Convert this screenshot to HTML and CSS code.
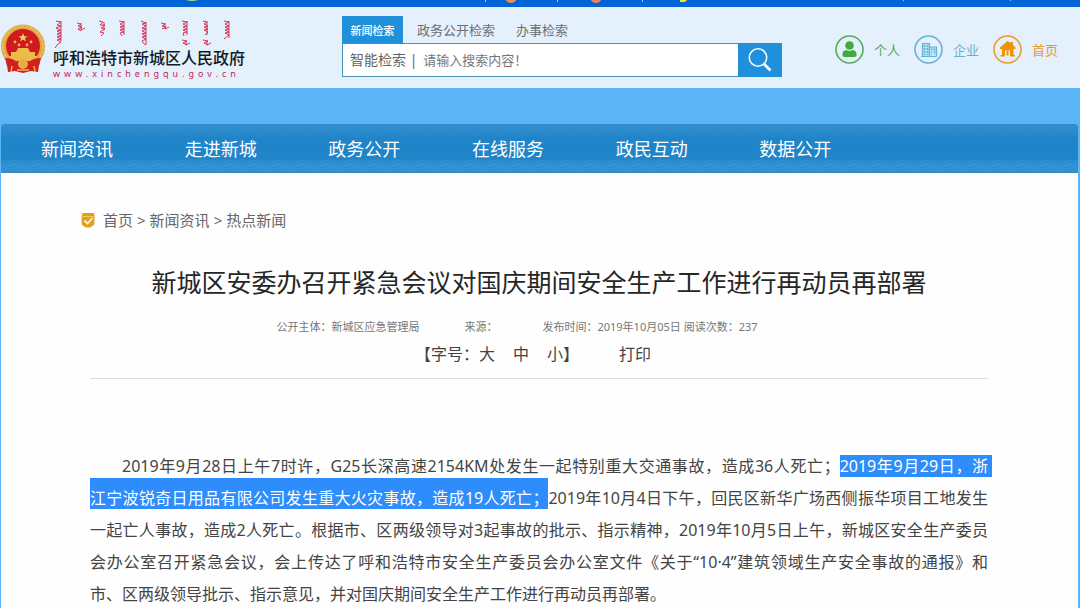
FILE: index.html
```html
<!DOCTYPE html>
<html lang="zh-CN">
<head>
<meta charset="utf-8">
<meta name="viewport" content="width=device-width, initial-scale=1">
<title>呼和浩特市新城区人民政府</title>
<link rel="stylesheet" href="styles.css">
</head>
<body>
<div class="topbar">
  <svg width="1080" height="7" viewBox="0 0 1080 7" aria-hidden="true">
    <ellipse cx="192" cy="-3" rx="9" ry="4" fill="#9fe08a"/>
    <circle cx="511" cy="-3" r="6" fill="#e8935a"/>
    <circle cx="596" cy="-3" r="6" fill="#e8835a"/>
    <path d="M680 0h7l-2 2h-5z" fill="#f3e32c"/>
    <path d="M485.500 0v2M557.500 0v2M642.500 0v2M903.500 0v1M1010.500 0v1" stroke="#9cc8f5"/>
  </svg>
</div>

<header class="header">
  <div class="brand">
    <svg class="emblem" viewBox="0 0 46 50" aria-hidden="true">
      <path d="M6 34 8 48 15 47 23 49 31 47 38 48 40 34z" fill="#d3201f"/>
      <circle cx="23" cy="22.500" r="22" fill="#dfa543"/>
      <circle cx="23" cy="22.500" r="20" fill="none" stroke="#ecbd5c" stroke-width="2" stroke-dasharray="3 1"/>
      <circle cx="23" cy="22" r="17" fill="#cf1a20"/>
      <path d="m23 9 1.200 3.200h3.400l-2.700 2 1 3.300-2.900-2-2.900 2 1-3.300-2.700-2h3.400z" fill="#f5cf57"/>
      <g fill="#f0b94b">
        <circle cx="15" cy="18" r="1.400"/><circle cx="19" cy="21" r="1.400"/><circle cx="27" cy="21" r="1.400"/><circle cx="31" cy="18" r="1.400"/>
        <path d="M16 28l2-4h10l2 4h5v4H11v-4z"/>
        <path d="M9 32h28l-2 5H11z"/>
      </g>
      <path d="M5 34q8 0 12 4h12q4-4 12-4l-2 8q-6-2-8 3H15q-2-5-8-3z" fill="#d3201f"/>
      <circle cx="23" cy="40" r="5" fill="#e7ae45"/>
      <path d="M12 42l-1 6M34 42l1 6M17 46h12" stroke="#edb84b" stroke-width="1.500"/>
    </svg>
    <div class="brand-text">
      <svg class="script" viewBox="0 0 188 28" aria-hidden="true">
        <g fill="none" stroke="#d0365a" stroke-width="1">
          <path d="M3 1l5 1-4 3 4 1-5 2 5 2-4 1 4 2-4 1 4 2-4 1 4 2-4 1 4 2-3 2-3 4M8 1v20"/>
          <path d="M24 3l4 1-3 2 4 1-4 2 3 2M28 3v7l4-2"/>
          <path d="M46 1l4 1-3 3 5 0-4 3 4 1-5 3 4 1-3 3M51 2v8"/>
          <path d="M66 1l5 1-4 2 4 2-4 1 4 2-4 1 4 2-4 1 2 3M71 1v14"/>
          <path d="M88 1l5 2-4 1 4 2-4 2 4 1-4 2 4 2-4 1 4 2-4 1 4 2-4 2 3 4M93 2v23"/>
          <path d="M108 3l4 1-3 2 4 1-4 2M112 3v6l4-2"/>
          <path d="M129 1l5 1-4 2 4 2-4 1 4 2-4 1 4 2-4 1 1 3M134 1v14M129 20l5 1-4 2 4 2M133 21v4l4-2"/>
          <path d="M150 1l4 1-3 2 4 2-4 1 4 2-4 1 4 2-3 3M154 1v14M150 20l5 1-4 2 4 2M154 21v4l4-2"/>
          <path d="M171 1l5 1-4 2 4 2-4 1 4 2-4 1 4 2-4 1 4 2-5 4M176 1v17"/>
        </g>
      </svg>
      <div class="brand-name">呼和浩特市新城区人民政府</div>
      <div class="brand-url">www.xinchengqu.gov.cn</div>
    </div>
  </div>

  <form class="search" role="search">
    <div class="tabs">
      <button type="button" class="tab tab-active">新闻检索</button>
      <button type="button" class="tab">政务公开检索</button>
      <button type="button" class="tab">办事检索</button>
    </div>
    <div class="search-row">
      <label class="search-label" for="q">智能检索 |</label>
      <input class="search-input" id="q" type="text" placeholder="请输入搜索内容！">
      <button class="search-button" type="submit" aria-label="搜索">
        <svg width="24" height="24" viewBox="0 0 24 24" fill="none" stroke="#eefaff" aria-hidden="true">
          <circle cx="10" cy="9.500" r="8.700" stroke-width="1.600"/>
          <path d="M16 16l6.500 6.500" stroke-width="2.800"/>
        </svg>
      </button>
    </div>
  </form>

  <nav class="user-links" aria-label="用户">
    <a class="user-link person" href="#">
      <svg width="29" height="29" viewBox="0 0 29 29" aria-hidden="true">
        <circle cx="14.500" cy="14.500" r="13.500" fill="none" stroke="currentColor" stroke-width="1.600"/>
        <circle cx="14.500" cy="10.500" r="4.300" fill="#3fab3f"/>
        <path d="M7.500 21v-2q0-3.500 4-4 3 2.200 6 0 4 .5 4 4v2q-1 1-2 1h-10q-1 0-2-1z" fill="#3fab3f"/>
      </svg>
      <span>个人</span>
    </a>
    <a class="user-link company" href="#">
      <svg width="29" height="29" viewBox="0 0 29 29" aria-hidden="true">
        <circle cx="14.500" cy="14.500" r="13.500" fill="none" stroke="currentColor" stroke-width="1.600"/>
        <path d="M8.500 21V8.500h7V21M15.500 12h7v9M7 21.500h16" fill="#b5ddf1" stroke="#62b3dc" stroke-width="1.200"/>
        <path d="M10.500 10v10M13.500 10v10M17.500 13.500v7M20.500 13.500v7" stroke="#62b3dc" stroke-width="1.500" stroke-dasharray="2 1"/>
      </svg>
      <span>企业</span>
    </a>
    <a class="user-link home" href="#">
      <svg width="29" height="29" viewBox="0 0 29 29" aria-hidden="true">
        <circle cx="14.500" cy="14.500" r="13.500" fill="none" stroke="currentColor" stroke-width="1.600"/>
        <path d="M14.500 6l3 2V7h2.500v3l2.500 2.500v1.500h-2v6h1.500v1.500H17v-6h-5v6H7.500V20H9v-6H7v-1.500z" fill="#f09208"/>
        <path d="M13.500 15.500h2v5h-2z" fill="#f09208"/>
      </svg>
      <span>首页</span>
    </a>
  </nav>
</header>

<div class="page">
  <nav class="mainnav" aria-label="主导航">
    <a href="#">新闻资讯</a>
    <a href="#">走进新城</a>
    <a href="#">政务公开</a>
    <a href="#">在线服务</a>
    <a href="#">政民互动</a>
    <a href="#">数据公开</a>
  </nav>

  <main class="content">
    <nav class="crumbs" aria-label="当前位置">
      <svg width="14" height="15" viewBox="0 0 14 15" aria-hidden="true">
        <path d="M1 1.500Q1 0 2.500 0h9Q13.500 0 13.500 1.500V10q0 2-2 3L9 14.500H5L2.500 13Q.5 12 .5 10z" fill="#dfa01f"/>
        <path d="M0 3.500h14" stroke="#f0c467"/>
        <path d="M3.500 7.500l3 3 5-5.500" fill="none" stroke="#fff6dc" stroke-width="1.800"/>
      </svg>
      <a href="#">首页</a><span>&gt;</span><a href="#">新闻资讯</a><span>&gt;</span><a href="#">热点新闻</a>
    </nav>

    <article class="article">
      <h1 class="title">新城区安委办召开紧急会议对国庆期间安全生产工作进行再动员再部署</h1>
      <div class="meta">
        <span>公开主体：新城区应急管理局</span>
        <span>来源：</span>
        <span>发布时间：2019年10月05日 阅读次数：237</span>
      </div>
      <div class="tools">
        <div class="sizes">
          <span>【字号：<button type="button">大</button></span>
          <button type="button">中</button>
          <span><button type="button">小</button>】</span>
        </div>
        <button type="button">打印</button>
      </div>
      <p class="body">
        <span class="line indent">2019年9月28日上午7时许，G25长深高速2154KM处发生一起特别重大交通事故，造成36人死亡；<span class="mark mark-start">2019年9月29日，浙</span></span>
        <span class="line"><span class="mark mark-next">江宁波锐奇日用品有限公司发生重大火灾事故，造成19人死亡；</span>2019年10月4日下午，回民区新华广场西侧振华项目工地发生</span>
        <span class="line">一起亡人事故，造成2人死亡。根据市、区两级领导对3起事故的批示、指示精神，2019年10月5日上午，新城区安全生产委员</span>
        <span class="line">会办公室召开紧急会议，会上传达了呼和浩特市安全生产委员会办公室文件《关于“10·4”建筑领域生产安全事故的通报》和</span>
        <span class="line last">市、区两级领导批示、指示意见，并对国庆期间安全生产工作进行再动员再部署。</span>
      </p>
    </article>
  </main>
</div>
</body>
</html>
```

FILE: styles.css
```css
* {
  box-sizing: border-box;
}

body {
  margin: 0;
  background: #5ab4f6;
  color: #444;
  font-family: "Noto Sans", "Noto Sans CJK SC", sans-serif;
  font-size: 16px;
}

a {
  color: inherit;
  text-decoration: none;
}

button {
  padding: 0;
  border: 0;
  background: none;
  color: inherit;
  font: inherit;
  cursor: pointer;
}

.topbar {
  height: 7px;
  overflow: hidden;
  background: #0364d8;
}

.topbar svg {
  display: block;
}

/* Header */
.header {
  display: flex;
  align-items: flex-start;
  height: 81px;
  background: #e4f0fb;
}

.brand {
  display: flex;
  flex: 0 0 342px;
  gap: 7px;
  padding-top: 13px;
}

.emblem {
  width: 46px;
  height: 50px;
  margin-top: 4px;
}

.script {
  display: block;
  width: 188px;
  height: 28px;
}

.brand-name {
  color: #111a26;
  font-size: 16px;
  font-weight: 500;
  line-height: 20px;
  white-space: nowrap;
}

.brand-url {
  color: #c42453;
  font-size: 9px;
  line-height: 12px;
  letter-spacing: 4px;
  white-space: nowrap;
}

.search {
  flex: 0 0 440px;
  padding-top: 9px;
}

.tabs {
  display: flex;
  gap: 21px;
  height: 27px;
}

.tab {
  color: #6a6f75;
  font-size: 13px;
}

.tab-active {
  width: 61px;
  margin-right: -7px;
  background: #2190da;
  color: #fff;
  font-size: 11px;
  font-weight: 500;
}

.search-row {
  display: flex;
  align-items: stretch;
  height: 34px;
  border: 1px solid #4a8fb8;
  background: #fff;
}

.search-label {
  padding-left: 7px;
  color: #666;
  font-size: 14px;
  line-height: 32px;
}

.search-input {
  flex: 1;
  min-width: 0;
  padding: 0 0 0 6px;
  border: 0;
  outline: 0;
  background: none;
  color: #666;
  font-family: inherit;
  font-size: 13px;
}

.search-input::placeholder {
  color: #777;
}

.search-button {
  display: grid;
  place-items: center;
  width: 44px;
  margin: -1px;
  background: #2190da;
}

.user-links {
  display: flex;
  gap: 14px;
  margin-left: 53px;
  padding-top: 28px;
}

.user-link {
  display: flex;
  align-items: center;
  gap: 10px;
  font-size: 13px;
  white-space: nowrap;
}

.person {
  color: #57a85a;
}

.company {
  color: #68b0d0;
}

.home {
  color: #ea9a2c;
}

/* Main navigation */
.page {
  margin: 36px 2px 0 1px;
}

.mainnav {
  display: grid;
  grid-template-columns: repeat(6, 1fr);
  align-items: center;
  height: 49px;
  padding: 0 175px 0 40px;
  border-bottom: 1px solid #3a85bb;
  border-radius: 4px 4px 0 0;
  background:
    repeating-radial-gradient(circle at 12px 0, transparent 0 3px, rgba(20, 110, 175, 0.18) 3px 4px) 0 0 / 24px 9px repeat-x,
    repeating-radial-gradient(circle at 12px 12px, transparent 0 3px, rgba(110, 190, 235, 0.14) 3px 4px) 0 100% / 24px 12px repeat-x,
    linear-gradient(#2f8fcf 0 6px, #1f84c8 14px 34px, #2f8fd2 40px);
  color: #fff;
  font-size: 18px;
}

.mainnav a {
  white-space: nowrap;
}

/* Article */
.content {
  min-height: 435px;
  padding: 35px 90px 0 80px;
  background: #fefefe;
}

.crumbs {
  display: flex;
  align-items: center;
  gap: 4px;
  color: #666;
  font-size: 15px;
  line-height: 24px;
}

.crumbs svg {
  margin-right: 4px;
}

.article {
  padding-left: 9px;
}

.title {
  margin: 30px 0 0;
  color: #262626;
  font-size: 25px;
  font-weight: 400;
  line-height: 40px;
  text-align: center;
}

.meta {
  display: flex;
  justify-content: center;
  gap: 45px;
  margin-top: 17px;
  padding-right: 44px;
  color: #777;
  font-size: 11px;
  line-height: 16px;
}

.tools {
  display: flex;
  justify-content: center;
  gap: 40px;
  padding: 6px 12px 11px 0;
  border-bottom: 1px solid #ddd;
  line-height: 26px;
}

.sizes {
  display: flex;
  gap: 18px;
}

.body {
  margin: 71px 0 0;
  line-height: 32px;
}

.line {
  display: block;
  text-align: justify;
  text-align-last: justify;
}

.indent {
  padding-left: 32px;
}

.last {
  text-align-last: left;
}

.mark {
  background: #2f8dfb;
  color: #fff;
}

.mark-start {
  box-shadow: 4px 0 0 #2f8dfb;
}

.mark-next {
  padding-top: 9px;
}
```
